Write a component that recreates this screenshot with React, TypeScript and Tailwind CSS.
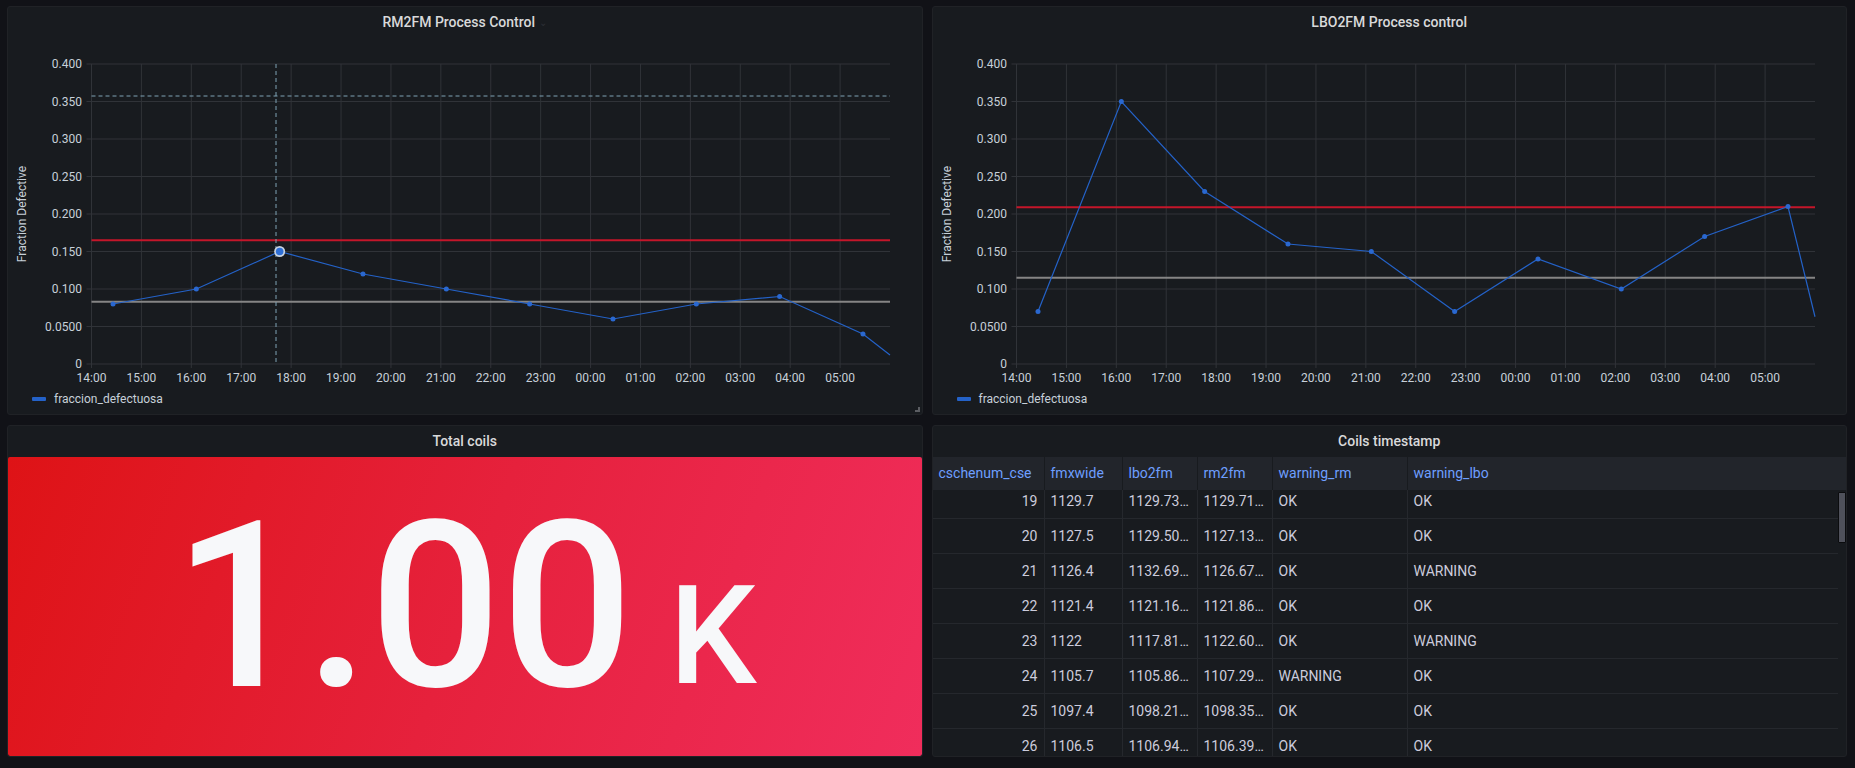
import React from 'react';

const PLOT = { left: 83.5, right: 882, top: 26, bottom: 326 };
const HOUR_W = (PLOT.right - PLOT.left) / 16;
const hours = ['14:00', '15:00', '16:00', '17:00', '18:00', '19:00', '20:00', '21:00', '22:00', '23:00', '00:00', '01:00', '02:00', '03:00', '04:00', '05:00'];
const yTicks: [number, string][] = [
  [0, '0'],
  [0.05, '0.0500'],
  [0.1, '0.100'],
  [0.15, '0.150'],
  [0.2, '0.200'],
  [0.25, '0.250'],
  [0.3, '0.300'],
  [0.35, '0.350'],
  [0.4, '0.400'],
];

const yOf = (v: number) => PLOT.bottom - (v / 0.4) * 300;
const xOf = (i: number) => 105 + i * 83.33;

interface ChartProps {
  values: number[];
  endValue: number;
  red: number;
  gray: number;
  hoverIndex?: number;
}

const ProcessChart: React.FC<ChartProps> = ({ values, endValue, red, gray, hoverIndex }) => {
  const pts = values.map((v, i) => `${xOf(i)},${yOf(v)}`);
  pts.push(`${PLOT.right},${yOf(endValue)}`);

  return (
    <svg width={913} height={352} className="block">
      {/* grid */}
      {yTicks.map(([v]) => (
        <line key={v} x1={PLOT.left - 5} x2={PLOT.right} y1={yOf(v)} y2={yOf(v)} stroke="#303338" strokeWidth={1} />
      ))}
      {hours.map((h, i) => (
        <line key={h} x1={PLOT.left + i * HOUR_W} x2={PLOT.left + i * HOUR_W} y1={PLOT.top} y2={PLOT.bottom + 4} stroke="#303338" strokeWidth={1} />
      ))}

      {/* axis labels */}
      {yTicks.map(([v, label]) => (
        <text key={label} x={74} y={yOf(v)} textAnchor="end" dominantBaseline="central" fontSize={12} fill="#c7d0d9">
          {label}
        </text>
      ))}
      {hours.map((h, i) => (
        <text key={h} x={PLOT.left + i * HOUR_W} y={340} textAnchor="middle" dominantBaseline="central" fontSize={12} fill="#c7d0d9">
          {h}
        </text>
      ))}
      <text transform="translate(14,176) rotate(-90)" textAnchor="middle" dominantBaseline="central" fontSize={12} fill="#c7d0d9">
        Fraction Defective
      </text>

      {/* thresholds */}
      <line x1={PLOT.left} x2={PLOT.right} y1={yOf(red)} y2={yOf(red)} stroke="#c4162a" strokeWidth={2} />
      <line x1={PLOT.left} x2={PLOT.right} y1={yOf(gray)} y2={yOf(gray)} stroke="#858585" strokeWidth={2} />

      {hoverIndex !== undefined && (
        <>
          <line x1={PLOT.left} x2={PLOT.right} y1={58} y2={58} stroke="#7fa3b5" strokeWidth={1} strokeDasharray="4 3" />
          <line x1={268} x2={268} y1={PLOT.top} y2={PLOT.bottom} stroke="#7fa3b5" strokeWidth={1} strokeDasharray="4 3" />
        </>
      )}

      {/* series */}
      <polyline points={pts.join(' ')} fill="none" stroke="#2462c8" strokeWidth={1.2} />
      {values.map((v, i) =>
        i === hoverIndex ? (
          <g key={i}>
            <circle cx={xOf(i)} cy={yOf(v)} r={5.5} fill="#c9d3e0" />
            <circle cx={xOf(i)} cy={yOf(v)} r={3.8} fill="#2f6fd6" />
          </g>
        ) : (
          <circle key={i} cx={xOf(i)} cy={yOf(v)} r={2.5} fill="#2a68d0" />
        )
      )}
    </svg>
  );
};

const ChartPanel: React.FC<{ title: string; chevron?: boolean; resize?: boolean } & ChartProps> = ({ title, chevron, resize, ...chart }) => (
  <div className="relative bg-[#181b1f] border border-[#202226] rounded-[3px] flex flex-col h-[409px]">
    <div className="h-[31px] flex items-center justify-center gap-1 text-[14px] font-medium text-[#d8d9da]">
      <span>{title}</span>
      {chevron && <span className="text-[10px] text-[#2c2f35]">⌄</span>}
    </div>
    <ProcessChart {...chart} />
    <div className="flex items-center gap-2 pl-[24px] h-[18px] text-[12px] text-[#c7d0d9]">
      <span className="w-[14px] h-[4px] rounded-[1px] bg-[#2462c8]" />
      <span>fraccion_defectuosa</span>
    </div>
    {resize && <div className="absolute right-[2px] bottom-[2px] w-[5px] h-[5px] border-r-2 border-b-2 border-[#5b5d62]" />}
  </div>
);

const rows = [
  ['19', '1129.7', '1129.73…', '1129.71…', 'OK', 'OK'],
  ['20', '1127.5', '1129.50…', '1127.13…', 'OK', 'OK'],
  ['21', '1126.4', '1132.69…', '1126.67…', 'OK', 'WARNING'],
  ['22', '1121.4', '1121.16…', '1121.86…', 'OK', 'OK'],
  ['23', '1122', '1117.81…', '1122.60…', 'OK', 'WARNING'],
  ['24', '1105.7', '1105.86…', '1107.29…', 'WARNING', 'OK'],
  ['25', '1097.4', '1098.21…', '1098.35…', 'OK', 'OK'],
  ['26', '1106.5', '1106.94…', '1106.39…', 'OK', 'OK'],
];

const headers = ['cschenum_cse', 'fmxwide', 'lbo2fm', 'rm2fm', 'warning_rm', 'warning_lbo'];
const COLS = 'grid grid-cols-[112px_78px_75px_75px_135px_1fr]';

const CoilsTable: React.FC = () => (
  <div className="relative bg-[#181b1f] border border-[#202226] rounded-[3px] flex flex-col h-[332px] overflow-hidden">
    <div className="h-[31px] flex items-center justify-center text-[14px] font-medium text-[#d8d9da] shrink-0">Coils timestamp</div>
    <div className={`${COLS} h-[33px] bg-[#22252b] shrink-0 text-[14px] text-[#6e9fff]`}>
      {headers.map((h, i) => (
        <div key={h} className={`flex items-center px-[6px] ${i < 5 ? 'border-r border-[#181b1f]' : ''}`}>
          {h}
        </div>
      ))}
    </div>
    <div className="relative flex-1 overflow-hidden">
      <div className="-mt-[6px] mr-[8px]">
        {rows.map((r) => (
          <div key={r[0]} className={`${COLS} h-[35px] border-b border-[#25282d] text-[14px] text-[#ccccdc]`}>
            {r.map((c, i) => (
              <div
                key={i}
                className={`flex items-center whitespace-nowrap overflow-hidden ${i === 0 ? 'justify-end pr-[6px]' : 'pl-[6px]'} ${i < 5 ? 'border-r border-[#25282d]' : ''}`}
              >
                {c}
              </div>
            ))}
          </div>
        ))}
      </div>
      <div className="absolute right-[0px] top-[2px] w-[8px] h-[51px] bg-[#4f515b] border border-[#0b0c0e] rounded-[1px]" />
    </div>
  </div>
);

const StatPanel: React.FC = () => (
  <div className="bg-[#181b1f] border border-[#202226] rounded-[3px] flex flex-col h-[332px] overflow-hidden">
    <div className="h-[31px] flex items-center justify-center text-[14px] font-medium text-[#d8d9da] shrink-0">Total coils</div>
    <div className="flex-1 rounded-[2px] bg-[linear-gradient(110deg,#de1316_0%,#e6213c_50%,#f02d5c_100%)] flex items-center justify-center text-[#f7f8fa] font-medium leading-none">
      <span className="text-[232px] tracking-[0px]">1.00</span>
      <span className="text-[138px] ml-[36px] mt-[58px]">K</span>
    </div>
  </div>
);

export default function App() {
  return (
    <div className="w-[1855px] h-[768px] bg-[#111217] pt-[6px] pl-[7px] pr-[8px] font-[Roboto,'Liberation_Sans',sans-serif] overflow-hidden">
      <div className="grid grid-cols-2 gap-x-[9px] gap-y-[10px]">
        <ChartPanel
          title="RM2FM Process Control"
          chevron
          resize
          values={[0.08, 0.1, 0.15, 0.12, 0.1, 0.08, 0.06, 0.08, 0.09, 0.04]}
          endValue={0.012}
          red={0.165}
          gray={0.083}
          hoverIndex={2}
        />
        <ChartPanel
          title="LBO2FM Process control"
          values={[0.07, 0.35, 0.23, 0.16, 0.15, 0.07, 0.14, 0.1, 0.17, 0.21]}
          endValue={0.063}
          red={0.209}
          gray={0.115}
        />
        <StatPanel />
        <CoilsTable />
      </div>
    </div>
  );
}
